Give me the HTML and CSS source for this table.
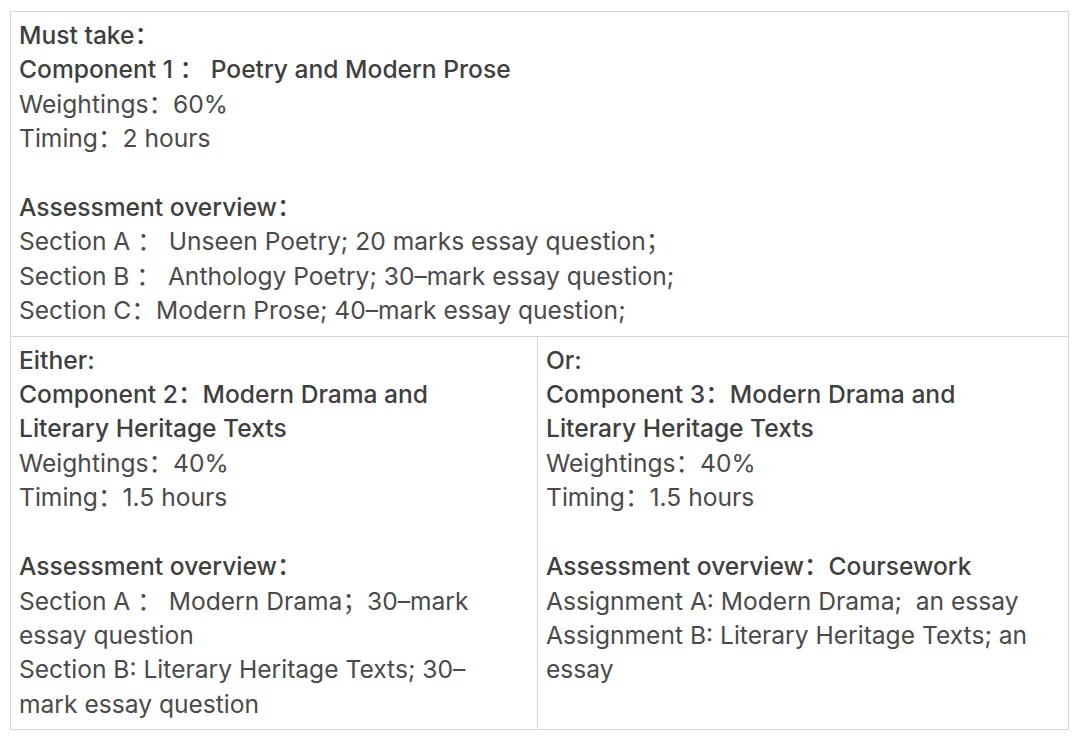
FILE: index.html
```html
<!DOCTYPE html>
<html>
<head>
<meta charset="utf-8">
<link rel="stylesheet" href="styles.css">
</head>
<body>
<div class="table">
  <div class="row full">
    <div class="cell">
      <div class="b">Must take：</div>
      <div class="b">Component 1 ： Poetry and Modern Prose</div>
      <div>Weightings：60%</div>
      <div>Timing：2 hours</div>
      <div class="blank">&nbsp;</div>
      <div class="b">Assessment overview：</div>
      <div>Section A ： Unseen Poetry; 20 marks essay question；</div>
      <div>Section B ： Anthology Poetry; 30–mark essay question;</div>
      <div>Section C：Modern Prose; 40–mark essay question;</div>
    </div>
  </div>
  <div class="row split">
    <div class="cell left">
      <div class="b">Either:</div>
      <div class="b">Component 2：Modern Drama and Literary Heritage Texts</div>
      <div>Weightings：40%</div>
      <div>Timing：1.5 hours</div>
      <div class="blank">&nbsp;</div>
      <div class="b">Assessment overview：</div>
      <div>Section A ： Modern Drama；30–mark essay question</div>
      <div>Section B: Literary Heritage Texts; 30–mark essay question</div>
    </div>
    <div class="cell">
      <div class="b">Or:</div>
      <div class="b">Component 3：Modern Drama and Literary Heritage Texts</div>
      <div>Weightings：40%</div>
      <div>Timing：1.5 hours</div>
      <div class="blank">&nbsp;</div>
      <div class="b">Assessment overview：Coursework</div>
      <div>Assignment A: Modern Drama;&nbsp; an essay</div>
      <div>Assignment B: Literary Heritage Texts; an essay</div>
    </div>
  </div>
</div>
</body>
</html>
```

FILE: styles.css
```css
html, body {
  margin: 0;
  background: #ffffff;
}
body {
  padding: 11px 12px 0 10px;
  font-family: "Inter", "Noto Sans CJK SC", sans-serif;
  font-size: 24.6px;
  line-height: 34.4px;
  color: #4a4a4a;
}
.table {
  border: 1px solid #d6d6d6;
  width: 1057px;
}
.row.split {
  display: grid;
  grid-template-columns: 527px 1fr;
  border-top: 1px solid #d6d6d6;
}
.cell {
  padding: 6px 24px 8px 8px;
}
.cell.left {
  border-right: 1px solid #d6d6d6;
}
.b {
  font-weight: 500;
  color: #3f3f3f;
}
```
